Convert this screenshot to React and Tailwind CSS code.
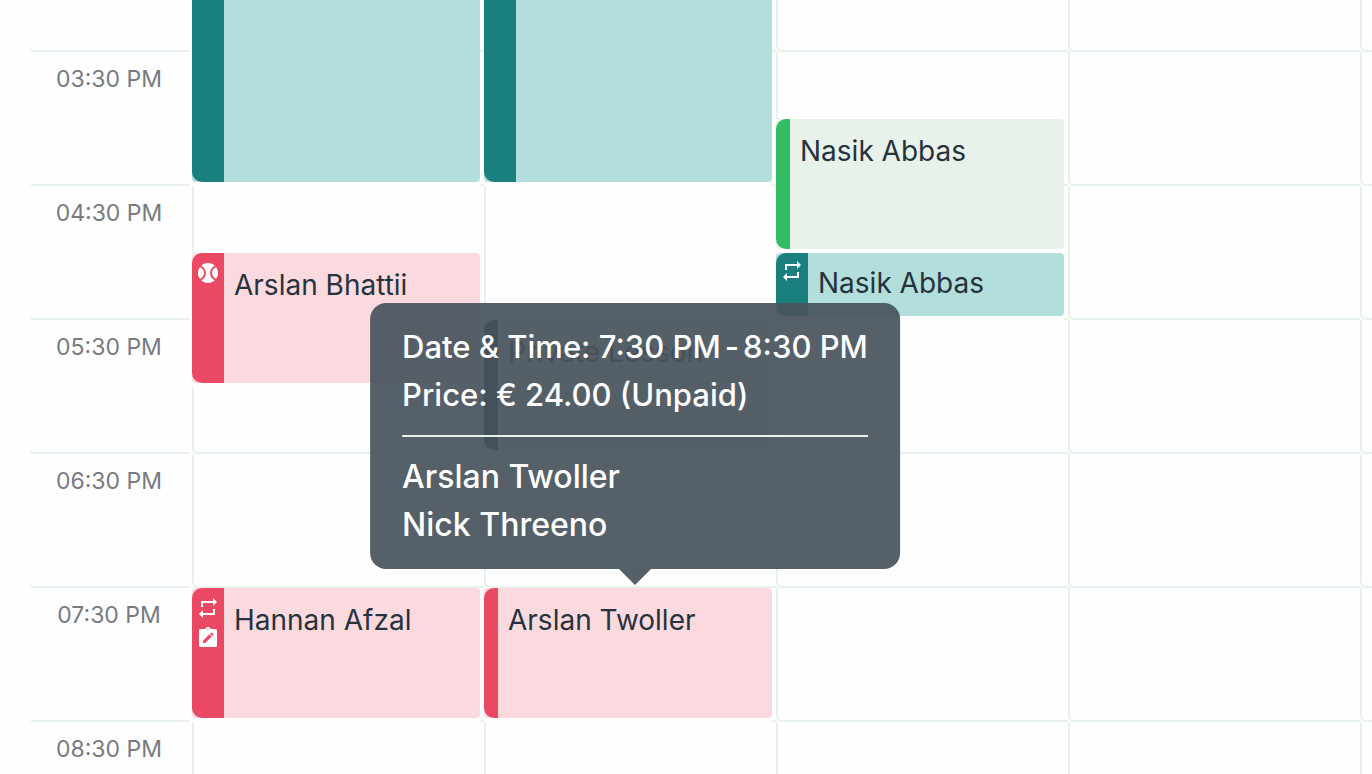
import React from 'react';
import { MdRepeat, MdSportsBaseball } from 'react-icons/md';

const hours = [
    { label: '', row: 'row-[1/2]' },
    { label: '03:30 PM', row: 'row-[2/4]' },
    { label: '04:30 PM', row: 'row-[4/6]' },
    { label: '05:30 PM', row: 'row-[6/8]' },
    { label: '06:30 PM', row: 'row-[8/10]' },
    { label: '07:30 PM', row: 'row-[10/12]' },
    { label: '08:30 PM', row: 'row-[12/14]' }
];

const courts = ['col-[2]', 'col-[3]', 'col-[4]', 'col-[5]', 'col-[6]'];

const ClipboardEdit = () => (
    <svg viewBox="0 0 24 24" className="size-6" fill="currentColor" aria-hidden="true">
        <path
            fillRule="evenodd"
            d="M19.500 3h-4.700a3 3 0 0 0-5.600 0H4.500A1.500 1.500 0 0 0 3 4.500v15A1.500 1.500 0 0 0 4.500 21h15a1.500 1.500 0 0 0 1.500-1.500v-15A1.500 1.500 0 0 0 19.500 3zM12 2.900a.7.7 0 1 1 0 1.400.7.7 0 0 1 0-1.400zM7 17v-2.300l6.400-6.400 2.300 2.300L9.300 17H7zm10.300-8-1 1L14 7.700l1-1a.6.6 0 0 1 .9 0l1.400 1.400a.6.6 0 0 1 0 .9z"
        />
    </svg>
);

const themes = {
    teal: { card: 'bg-[#b2dfdb]', bar: 'bg-[#1a807e]' },
    red: { card: 'bg-[#fadadf]', bar: 'bg-[#eb4963]' },
    green: { card: 'bg-[#e8f2ea]', bar: 'bg-[#32bd65]' },
    dark: { card: 'bg-[#eceef0]', bar: 'bg-[#26323c]' }
};

const bookings = [
    { id: 1, place: 'col-[2] row-[1/4]', theme: 'teal', wide: true, cut: true },
    { id: 2, place: 'col-[3] row-[1/4]', theme: 'teal', wide: true, cut: true },
    { id: 3, place: 'col-[4] row-[3/5]', theme: 'green', name: 'Nasik Abbas' },
    { id: 4, place: 'col-[4] row-[5/6]', theme: 'teal', name: 'Nasik Abbas', wide: true, short: true, icons: ['repeat'] },
    { id: 5, place: 'col-[2] row-[5/7]', theme: 'red', name: 'Arslan Bhattii', wide: true, icons: ['ball'] },
    { id: 6, place: 'col-[3] row-[6/8]', theme: 'dark', name: 'Private Lesson' },
    { id: 7, place: 'col-[2] row-[10/12]', theme: 'red', name: 'Hannan Afzal', wide: true, icons: ['repeat', 'notes'] },
    {
        id: 8,
        place: 'col-[3] row-[10/12]',
        theme: 'red',
        name: 'Arslan Twoller',
        details: {
            start: '7:30 PM',
            end: '8:30 PM',
            price: '€ 24.00 (Unpaid)',
            players: ['Arslan Twoller', 'Nick Threeno']
        }
    }
];

const icons = {
    repeat: <MdRepeat size={24} />,
    ball: <MdSportsBaseball size={24} />,
    notes: <ClipboardEdit />
};

const Tooltip = ({ details }) => (
    <div
        role="tooltip"
        className="absolute bottom-full left-1/2 z-20 mb-[19px] -translate-x-1/2 whitespace-nowrap rounded-2xl bg-[#48545d]/93 px-8 py-5 font-medium text-white"
    >
        <div className="text-[31px] leading-[48px]">
            <p className="flex gap-1">
                <span>Date &amp; Time: {details.start}</span>
                <span>-</span>
                <span>{details.end}</span>
            </p>
            <p>Price: {details.price}</p>
        </div>
        <hr className="my-4 border-t-2 border-[#e8f2ea]" />
        <div className="text-[32px] leading-[48px]">
            {details.players.map(player => <p key={player}>{player}</p>)}
        </div>
        {/* Arrow */}
        <div className="absolute top-full left-1/2 h-4 w-8 -translate-x-1/2 bg-[#555f68] [clip-path:polygon(0_0,100%_0,50%_100%)]"></div>
    </div>
);

const Booking = ({ booking }) => {
    const theme = themes[booking.theme];

    return (
        <div className={`${booking.place} mr-1 flex bg-[#fefefe] pb-1`}>
            <div className={`flex min-w-0 flex-1 ${booking.cut ? 'rounded-b' : 'rounded'} ${theme.card}`}>
                <div
                    className={`flex shrink-0 flex-col items-center gap-1.5 text-white ${theme.bar} ${
                        booking.wide ? 'w-8' : 'w-3.5'
                    } ${booking.cut ? 'rounded-bl-[10px]' : 'rounded-l-[10px]'} ${booking.short ? 'pt-1.5' : 'pt-2'}`}
                >
                    {booking.icons?.map(icon => <span key={icon}>{icons[icon]}</span>)}
                </div>
                <div className={`relative flex-1 px-2.5 ${booking.short ? 'pt-2.5' : 'pt-3'}`}>
                    <p className="text-[28px] leading-10 whitespace-nowrap text-[#26323c]">{booking.name}</p>
                    {booking.details && <Tooltip details={booking.details} />}
                </div>
            </div>
        </div>
    );
};

const App = () => {
    return (
        <main className="h-screen overflow-hidden bg-[#fefefe] font-['Inter','Liberation_Sans',sans-serif]">
            <div className="grid grid-cols-[192px_repeat(5,minmax(292px,1fr))] grid-rows-[52px_repeat(12,67px)]">
                {hours.map(hour => (
                    <React.Fragment key={hour.row}>
                        <div
                            className={`${hour.row} col-[1] mr-0.5 ml-7 rounded-bl-md border-b-2 border-l-2 border-[#e8f2ea] border-l-transparent pt-2.5 pr-0.5 text-center text-[23px] leading-[34px] text-[#767b83]`}
                        >
                            {hour.label}
                        </div>
                        {courts.map(court => (
                            <div key={court} className={`${hour.row} ${court} rounded-bl-md border-b-2 border-l-2 border-[#e8f2ea]`}></div>
                        ))}
                    </React.Fragment>
                ))}
                {bookings.map(booking => <Booking key={booking.id} booking={booking} />)}
            </div>
        </main>
    );
};

export default App;
